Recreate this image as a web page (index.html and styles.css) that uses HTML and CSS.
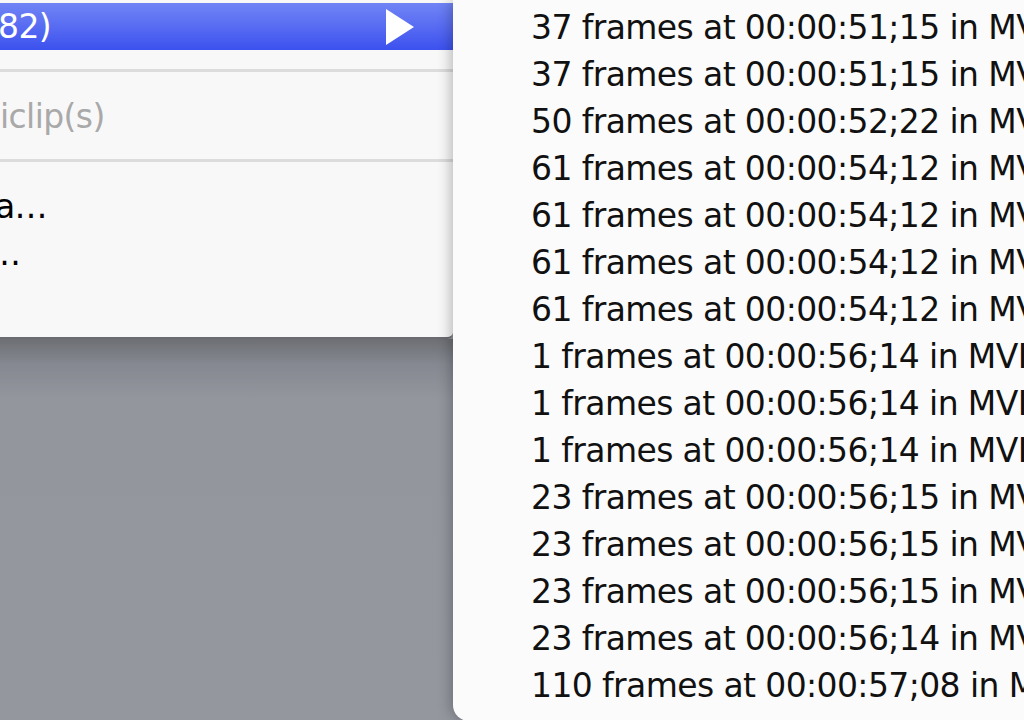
FILE: index.html
```html
<!DOCTYPE html>
<html>
<head>
<meta charset="utf-8">
<link rel="stylesheet" href="styles.css">
</head>
<body>
<div class="screen">
  <div class="left-col">
    <div class="menu">
      <div class="item selected">
        <span class="label shift-82">82)</span>
        <svg class="arrow" width="28" height="36" viewBox="0 0 28 36"><polygon points="0,0 28,18 0,36" fill="#ffffff"/></svg>
      </div>
      <div class="sep"><div class="line"></div></div>
      <div class="item disabled"><span class="label shift-clip">iclip(s)</span></div>
      <div class="sep"><div class="line"></div></div>
      <div class="item"><span class="label shift-a">a…</span></div>
      <div class="item"><span class="label shift-dots">…</span></div>
    </div>
    <div class="desk"></div>
  </div>
  <div class="submenu">
    <div class="row">37 frames at 00:00:51;15 in MVI_0147</div>
    <div class="row">37 frames at 00:00:51;15 in MVI_0148</div>
    <div class="row">50 frames at 00:00:52;22 in MVI_0149</div>
    <div class="row">61 frames at 00:00:54;12 in MVI_0150</div>
    <div class="row">61 frames at 00:00:54;12 in MVI_0151</div>
    <div class="row">61 frames at 00:00:54;12 in MVI_0152</div>
    <div class="row">61 frames at 00:00:54;12 in MVI_0153</div>
    <div class="row">1 frames at 00:00:56;14 in MVI_0154</div>
    <div class="row">1 frames at 00:00:56;14 in MVI_0155</div>
    <div class="row">1 frames at 00:00:56;14 in MVI_0156</div>
    <div class="row">23 frames at 00:00:56;15 in MVI_0157</div>
    <div class="row">23 frames at 00:00:56;15 in MVI_0158</div>
    <div class="row">23 frames at 00:00:56;15 in MVI_0159</div>
    <div class="row">23 frames at 00:00:56;14 in MVI_0160</div>
    <div class="row">110 frames at 00:00:57;08 in MVI_0161</div>
  </div>
</div>
</body>
</html>
```

FILE: styles.css
```css
html, body {
  margin: 0;
  padding: 0;
  width: 1024px;
  height: 720px;
  overflow: hidden;
  background: #94979e;
}

.screen {
  display: flex;
  width: 1024px;
  height: 720px;
  overflow: hidden;
  font-family: "DejaVu Sans", "Liberation Sans", sans-serif;
  font-size: 33px;
  letter-spacing: -0.6px;
  white-space: nowrap;
}

.left-col {
  width: 453px;
  flex: 0 0 453px;
  display: flex;
  flex-direction: column;
}

.menu {
  background: #f8f8f8;
  padding: 3px 0 60px 0;
  border-bottom-right-radius: 6px;
  border-bottom: 2px solid #6a6c71;
  overflow: hidden;
}

.item {
  height: 47px;
  line-height: 47px;
  display: flex;
  align-items: center;
  justify-content: space-between;
  color: #000000;
}

.item.selected {
  background: linear-gradient(#7084f5 0%, #5a6ef3 45%, #3c51ee 100%);
  color: #ffffff;
  padding-right: 39px;
}

.item.disabled {
  color: #a9a9a9;
}

.label {
  display: block;
}

.shift-82 { margin-left: -2px; }
.shift-clip { margin-left: 0px; }
.shift-a { margin-left: -5px; }
.shift-dots { margin-left: -12px; }

.arrow {
  display: block;
}

.sep {
  padding: 19px 0 21px 0;
}

.sep .line {
  height: 3px;
  background: #dcdcdc;
}

.desk {
  flex: 1;
  background: linear-gradient(#6d6f74 0px, #858890 25px, #93969d 60px, #94979e 100%);
}

.submenu {
  flex: 1 0 auto;
  height: 721px;
  background: #fbfbfb;
  border-bottom-left-radius: 16px;
  padding: 4px 0 0 78px;
  box-sizing: border-box;
  color: #111111;
  box-shadow: -2px 0 14px rgba(0, 0, 0, 0.28);
  position: relative;
}

.row {
  height: 47px;
  line-height: 47px;
}
```
